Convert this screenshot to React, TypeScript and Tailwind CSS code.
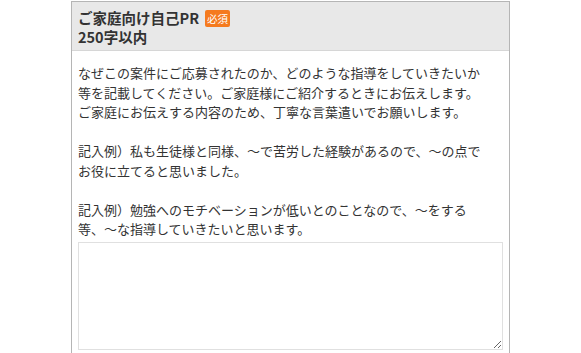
export default function App() {
  return (
    <div className="min-h-[353px] bg-white pt-px font-['Noto_Sans_CJK_JP',sans-serif] text-[#333]">
      <div className="mx-auto flex h-[352px] w-[439px] flex-col border border-b-0 border-[#b5b5b5]">
        {/* header */}
        <div className="h-[49px] shrink-0 border-b border-[#d6d6d6] bg-[#e8e8e8] px-[6px] pt-[7px]">
          <div className="flex h-[18px] items-center gap-[6px] text-[14.5px] font-bold leading-[18px]">
            <span>ご家庭向け自己PR</span>
            <span className="rounded-[2px] bg-[#f57a1e] px-[2px] text-[10.5px] font-normal leading-[17px] text-white">
              必須
            </span>
          </div>
          <div className="text-[14.5px] font-bold leading-[19px]">250字以内</div>
        </div>

        {/* body */}
        <div className="flex flex-1 flex-col px-[6px] pt-[12px]">
          <div className="text-[13px] leading-[19.5px]">
            <p>
              なぜこの案件にご応募されたのか、どのような指導をしていきたいか
              <br />
              等を記載してください。ご家庭様にご紹介するときにお伝えします。
              <br />
              ご家庭にお伝えする内容のため、丁寧な言葉遣いでお願いします。
            </p>
            <p className="mt-[19.5px]">
              記入例）私も生徒様と同様、～で苦労した経験があるので、～の点で
              <br />
              お役に立てると思いました。
            </p>
            <p className="mt-[19.5px]">
              記入例）勉強へのモチベーションが低いとのことなので、～をする
              <br />
              等、～な指導していきたいと思います。
            </p>
          </div>
          <textarea className="mt-[3px] h-[108px] w-full resize-y border border-[#e0e0e0] bg-white outline-none" />
        </div>
      </div>
    </div>
  )
}
